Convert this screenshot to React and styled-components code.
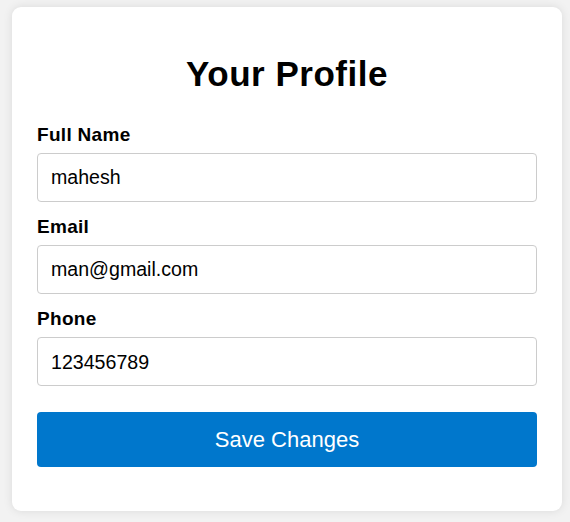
import React, { useState } from "react"
import styled, { createGlobalStyle } from "styled-components"

const GlobalStyle = createGlobalStyle`
  html, body {
    margin: 0;
    padding: 0;
    background: #f2f2f2;
    font-family: "Liberation Sans", Arial, sans-serif;
  }
`

function App() {
  const [form, setForm] = useState({
    name: "mahesh",
    email: "man@gmail.com",
    phone: "123456789",
  })

  const update = (key) => (e) => setForm({ ...form, [key]: e.target.value })

  return (
    <Page>
      <GlobalStyle />
      <Card>
        <Title>Your Profile</Title>
        <Field>
          <Label htmlFor="name">Full Name</Label>
          <Input id="name" value={form.name} onChange={update("name")} />
        </Field>
        <Field>
          <Label htmlFor="email">Email</Label>
          <Input id="email" type="email" value={form.email} onChange={update("email")} />
        </Field>
        <Field>
          <Label htmlFor="phone">Phone</Label>
          <Input id="phone" value={form.phone} onChange={update("phone")} />
        </Field>
        <SaveButton type="button">Save Changes</SaveButton>
      </Card>
    </Page>
  )
}

export default App

const Page = styled.div`
  padding: 7px 8px 10px 12px;
`
const Card = styled.div`
  box-sizing: border-box;
  width: 550px;
  background: #fff;
  border-radius: 9px;
  padding: 25px;
  box-shadow: 0 0 10px rgba(0, 0, 0, 0.1);
`
const Title = styled.h2`
  margin: 22px 0 30px;
  font-size: 35px;
  letter-spacing: 0.5px;
  font-weight: bold;
  text-align: center;
  color: #000;
`
const Field = styled.div`
  display: flex;
  flex-direction: column;
  margin-bottom: 14.2px;
`
const Label = styled.label`
  font-size: 19px;
  letter-spacing: 0.3px;
  font-weight: bold;
  color: #000;
  margin-bottom: 6.5px;
`
const Input = styled.input`
  box-sizing: border-box;
  height: 49.5px;
  padding: 1px 13px 0;
  font-family: inherit;
  font-size: 19.6px;
  color: #000;
  border: 1px solid #ccc;
  border-radius: 4px;
  outline: none;
`
const SaveButton = styled.button`
  display: block;
  width: 100%;
  height: 55px;
  margin: 26px 0 19px;
  border: none;
  border-radius: 4px;
  background: #0077cc;
  color: #fff;
  font-family: inherit;
  font-size: 22px;
  cursor: pointer;

  &:hover {
    background: #0066b3;
  }
`
